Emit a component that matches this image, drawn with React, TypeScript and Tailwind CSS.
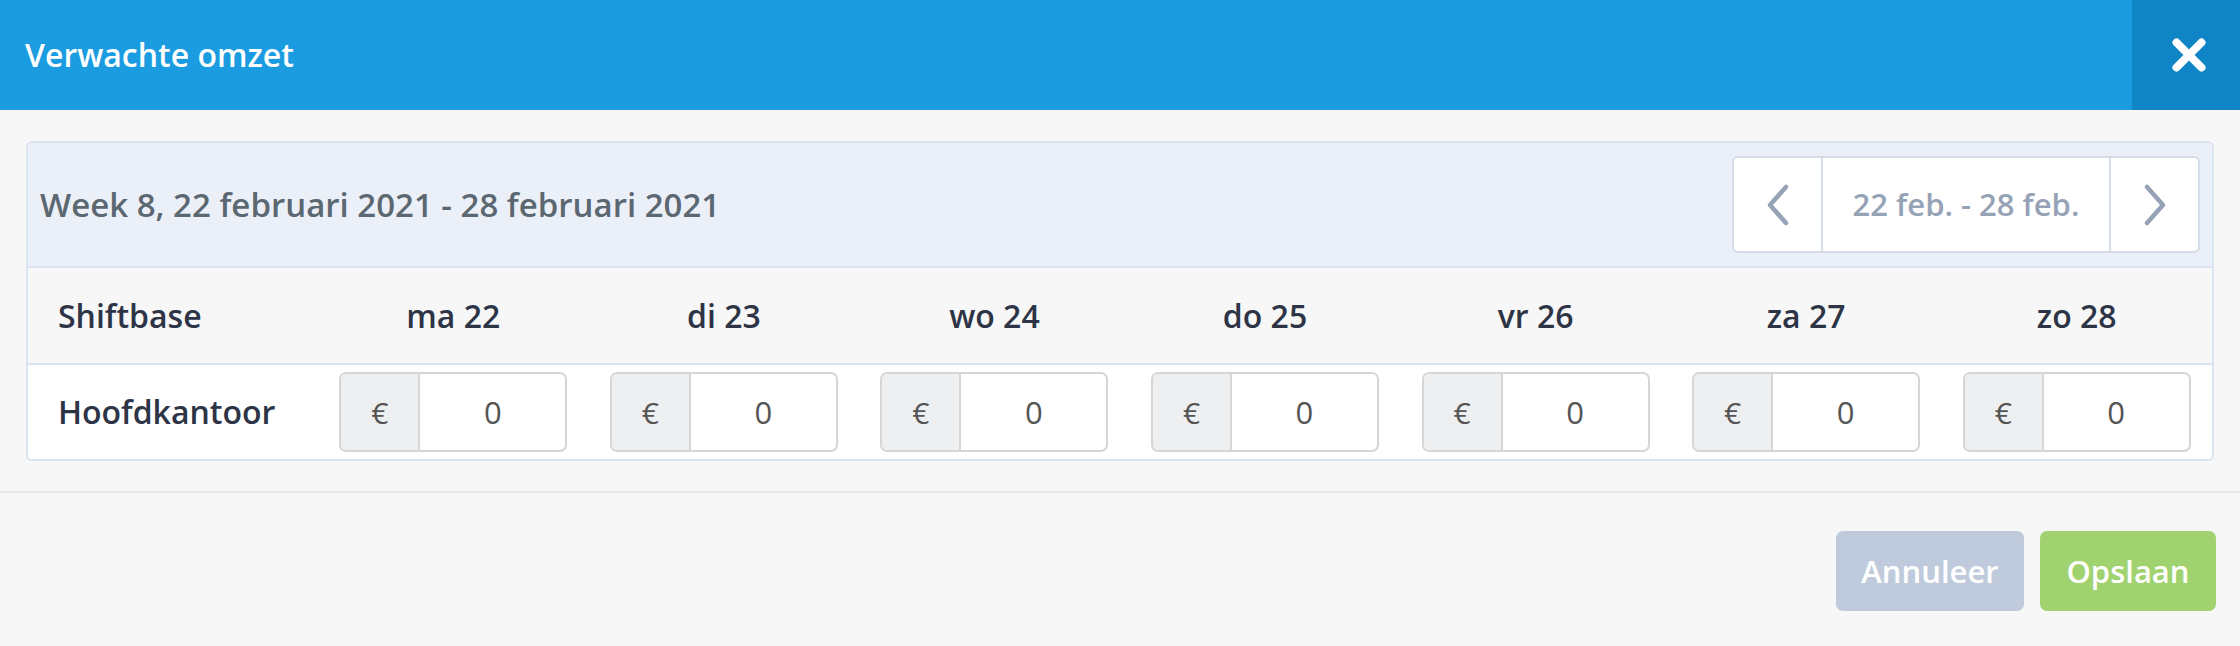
const DAYS = ["ma 22", "di 23", "wo 24", "do 25", "vr 26", "za 27", "zo 28"];

function Chevron({ dir }: { dir: "left" | "right" }) {
  return (
    <svg width="24" height="42" viewBox="0 0 24 42" fill="none" stroke="currentColor" strokeWidth="4.5" strokeLinecap="round" strokeLinejoin="round">
      {dir === "left" ? <path d="M20 3 L4 21 L20 39" /> : <path d="M4 3 L20 21 L4 39" />}
    </svg>
  );
}

export default function App() {
  return (
    <div className="flex h-[646px] w-full flex-col bg-[#f7f7f7] font-['Open_Sans',sans-serif]">
      <header className="flex h-[110px] items-stretch justify-between bg-[#1b9be0]">
        <h1 className="flex items-center pl-[25px] text-[32px] font-semibold text-white">Verwachte omzet</h1>
        <button type="button" className="flex w-[108px] items-center justify-center bg-[#0f85c6] pl-[6px] text-white">
          <svg width="36" height="36" viewBox="0 0 36 36" stroke="currentColor" strokeWidth="8" strokeLinecap="round">
            <path d="M5.5 5.5 L30.5 30.5 M30.5 5.5 L5.5 30.5" />
          </svg>
        </button>
      </header>

      <div className="px-[26px] pt-[31px]">
        <div className="overflow-hidden rounded-[6px] border-2 border-[#dae3f0] bg-white">
          <div className="flex h-[125px] items-center justify-between border-b-2 border-[#dae3f0] bg-[#ebf0f8] pl-[12px] pr-[12px]">
            <span className="text-[33px] font-semibold text-[#5b6771]">
              Week 8, 22 februari 2021 - 28 februari 2021
            </span>
            <div className="flex h-[97px] overflow-hidden rounded-[6px] border-2 border-[#d5dce8] bg-white text-[#96a2b6]">
              <button type="button" className="flex w-[89px] items-center justify-center border-r-2 border-[#d5dce8]">
                <Chevron dir="left" />
              </button>
              <span className="flex w-[286px] items-center justify-center text-[31px] font-semibold">
                22 feb. - 28 feb.
              </span>
              <button type="button" className="flex w-[89px] items-center justify-center border-l-2 border-[#d5dce8]">
                <Chevron dir="right" />
              </button>
            </div>
          </div>

          <div className="grid h-[97px] grid-cols-[290px_repeat(7,1fr)] items-center border-b-2 border-[#dae3f0] bg-[#f7f7f7] text-[32px] font-semibold text-[#2d3446]">
            <span className="pl-[30px]">Shiftbase</span>
            {DAYS.map((d) => (
              <span key={d} className="text-center">
                {d}
              </span>
            ))}
          </div>

          <div className="grid h-[94px] grid-cols-[290px_repeat(7,1fr)] items-center bg-white">
            <span className="pl-[30px] text-[32px] font-semibold text-[#2d3446]">Hoofdkantoor</span>
            {DAYS.map((d) => (
              <div key={d} className="flex justify-center">
                <div className="flex h-[80px] w-[228px] overflow-hidden rounded-[7px] border-2 border-[#d6d6d6] text-[#555]">
                  <span className="flex w-[79px] items-center justify-center border-r-2 border-[#d6d6d6] bg-[#eeeff1] text-[30px]">
                    €
                  </span>
                  <span className="flex flex-1 items-center justify-center text-[31px]">0</span>
                </div>
              </div>
            ))}
          </div>
        </div>
      </div>

      <div className="mt-[30px] border-t-2 border-[#e6e6e6]" />

      <div className="flex justify-end gap-[16px] pr-[24px] pt-[38px]">
        <button type="button" className="h-[80px] w-[188px] rounded-[7px] bg-[#bfcbdc] text-[31px] font-semibold text-white">
          Annuleer
        </button>
        <button type="button" className="h-[80px] w-[176px] rounded-[7px] bg-[#a0d36f] text-[31px] font-semibold text-white">
          Opslaan
        </button>
      </div>
    </div>
  );
}
